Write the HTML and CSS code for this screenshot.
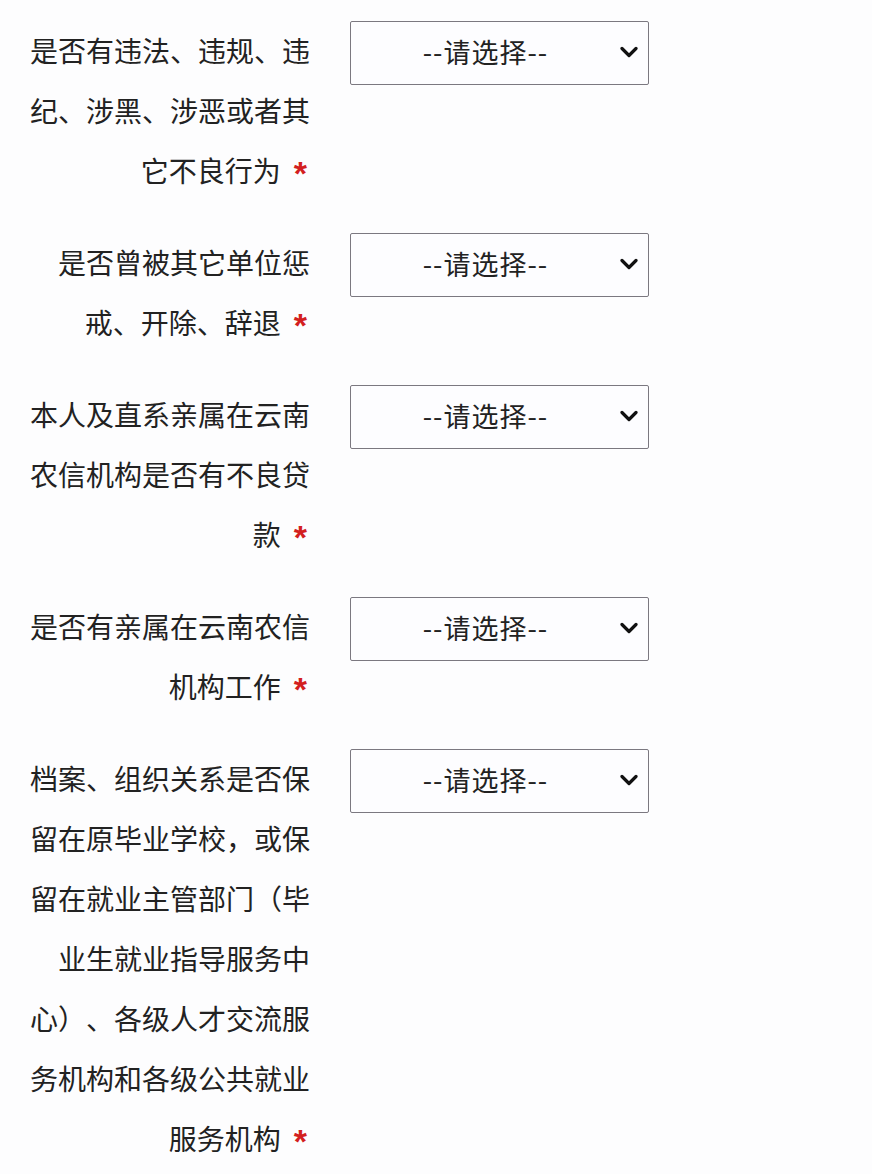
FILE: index.html
```html
<!DOCTYPE html>
<html lang="zh-CN">
<head>
    <meta charset="utf-8">
    <link rel="stylesheet" href="styles.css">
</head>
<body>
    <div id="form-content">
        <div class="form-row">
            <label class="form-label">是否有违法、违规、违纪、涉黑、涉恶或者其它不良行为<span class="required">*</span></label>
            <div class="select-wrap">
                <select class="form-select"><option>--请选择--</option><option>是</option><option>否</option></select>
                <svg class="chevron" width="18" height="12" viewBox="0 0 18 12"><path d="M2 2.5 L9 9.5 L16 2.5" fill="none" stroke="#111" stroke-width="3.2" stroke-linecap="round" stroke-linejoin="round"/></svg>
            </div>
        </div>
        <div class="form-row">
            <label class="form-label">是否曾被其它单位惩戒、开除、辞退<span class="required">*</span></label>
            <div class="select-wrap">
                <select class="form-select"><option>--请选择--</option><option>是</option><option>否</option></select>
                <svg class="chevron" width="18" height="12" viewBox="0 0 18 12"><path d="M2 2.5 L9 9.5 L16 2.5" fill="none" stroke="#111" stroke-width="3.2" stroke-linecap="round" stroke-linejoin="round"/></svg>
            </div>
        </div>
        <div class="form-row">
            <label class="form-label">本人及直系亲属在云南农信机构是否有不良贷款<span class="required">*</span></label>
            <div class="select-wrap">
                <select class="form-select"><option>--请选择--</option><option>是</option><option>否</option></select>
                <svg class="chevron" width="18" height="12" viewBox="0 0 18 12"><path d="M2 2.5 L9 9.5 L16 2.5" fill="none" stroke="#111" stroke-width="3.2" stroke-linecap="round" stroke-linejoin="round"/></svg>
            </div>
        </div>
        <div class="form-row">
            <label class="form-label">是否有亲属在云南农信机构工作<span class="required">*</span></label>
            <div class="select-wrap">
                <select class="form-select"><option>--请选择--</option><option>是</option><option>否</option></select>
                <svg class="chevron" width="18" height="12" viewBox="0 0 18 12"><path d="M2 2.5 L9 9.5 L16 2.5" fill="none" stroke="#111" stroke-width="3.2" stroke-linecap="round" stroke-linejoin="round"/></svg>
            </div>
        </div>
        <div class="form-row">
            <label class="form-label">档案、组织关系是否保留在原毕业学校，或保留在就业主管部门（毕业生就业指导服务中心）、各级人才交流服务机构和各级公共就业服务机构<span class="required">*</span></label>
            <div class="select-wrap">
                <select class="form-select"><option>--请选择--</option><option>是</option><option>否</option></select>
                <svg class="chevron" width="18" height="12" viewBox="0 0 18 12"><path d="M2 2.5 L9 9.5 L16 2.5" fill="none" stroke="#111" stroke-width="3.2" stroke-linecap="round" stroke-linejoin="round"/></svg>
            </div>
        </div>
    </div>
</body>
</html>
```

FILE: styles.css
```css
body{
    margin: 0;
    background-color: #fdfdfe;
    font-family: "Noto Sans CJK SC", "Noto Sans", sans-serif;
    color: #222;
}

#form-content{
    padding-top: 20px;
    padding-left: 28px;
}

.form-row{
    display: flex;
    align-items: flex-start;
    gap: 40px;
    margin-bottom: 32px;
}

.form-label{
    width: 282px;
    font-size: 28px;
    line-height: 60px;
    text-align: right;
    line-break: strict;
    text-spacing-trim: space-all;
}

.required{
    display: inline-block;
    margin-left: 13px;
    margin-right: 3px;
    color: #d31f1f;
    font-family: "Liberation Sans", sans-serif;
    font-size: 34px;
    font-weight: bold;
    line-height: 1;
    vertical-align: -3px;
}

.select-wrap{
    position: relative;
    width: 299px;
    height: 64px;
    margin-top: 1px;
}

.form-select{
    -webkit-appearance: none;
    appearance: none;
    width: 100%;
    height: 100%;
    box-sizing: border-box;
    border: 1.5px solid #7b7880;
    border-radius: 2px;
    background-color: #fdfdff;
    font-family: "Noto Sans CJK SC", "Noto Sans", sans-serif;
    font-size: 27px;
    letter-spacing: 1px;
    color: #222;
    padding: 0 38px 4px 10px;
    text-align: center;
    text-align-last: center;
}

.chevron{
    position: absolute;
    right: 11px;
    top: 25px;
    pointer-events: none;
}
```
